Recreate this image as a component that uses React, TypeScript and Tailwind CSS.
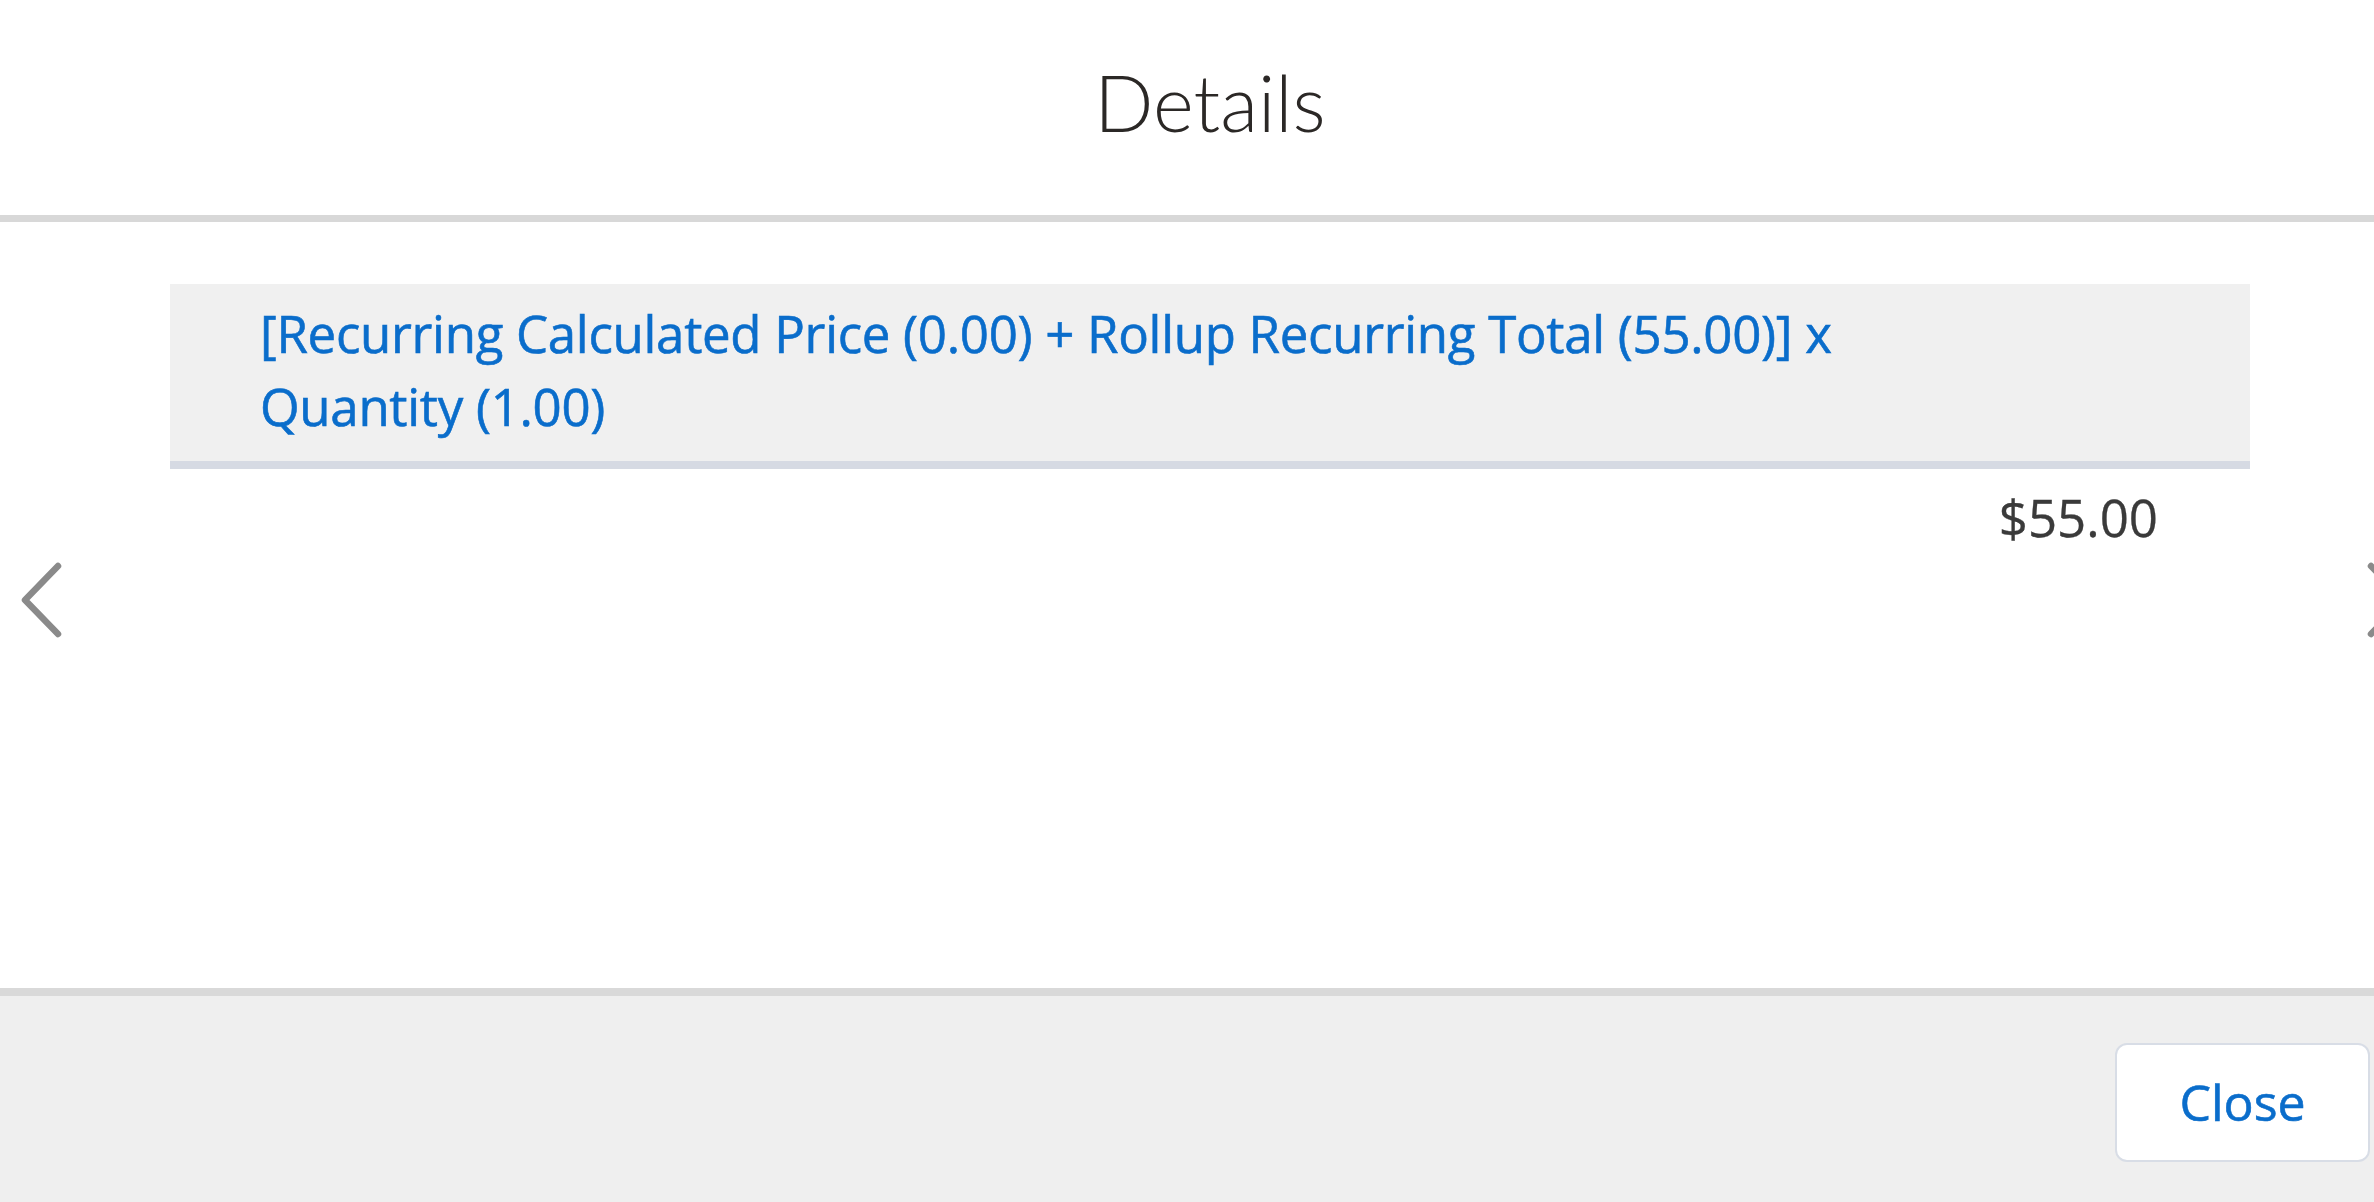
const formula = "[Recurring Calculated Price (0.00) + Rollup Recurring Total (55.00)] x Quantity (1.00)";

function Chevron({ dir }: { dir: "left" | "right" }) {
  const points = dir === "left" ? "38,4 5,38 38,72" : "6,4 39,38 6,72";
  return (
    <svg width="44" height="76" viewBox="0 0 44 76" fill="none" aria-hidden>
      <polyline points={points} stroke="#8a8a8a" strokeWidth="6.5" strokeLinecap="round" strokeLinejoin="round" />
    </svg>
  );
}

export default function App() {
  return (
    <div className="h-[1202px] w-full overflow-hidden bg-white font-['Open_Sans','Noto_Sans',sans-serif]">
      <div className="flex h-full w-[2420px] flex-col">
        {/* header */}
        <header className="flex h-[222px] shrink-0 items-start justify-center border-b-[7px] border-[#d8d8d8] pt-[57px]">
          <h2 className="font-['Lato',sans-serif] text-[78px] font-light leading-[90px] text-[#2b2826]">Details</h2>
        </header>

        {/* body */}
        <main className="relative flex-1 pt-[62px]">
          <button className="absolute left-[20px] top-[340px]" aria-label="Previous">
            <Chevron dir="left" />
          </button>
          <button className="absolute right-[11px] top-[340px]" aria-label="Next">
            <Chevron dir="right" />
          </button>

          <div className="mx-[170px]">
            <div className="border-b-[8px] border-[#d6dae3] bg-[#f0f0f0] pb-[18px] pl-[90px] pt-[13px]">
              <p className="max-w-[1660px] text-[51px] leading-[73px] tracking-[-0.3px] text-[#0a6dcb] [-webkit-text-stroke:0.6px_#0a6dcb]">
                {formula}
              </p>
            </div>
            <div className="mt-[12px] flex justify-end pr-[92px]">
              <span className="text-[51px] leading-[72px] text-[#3a3a3a] [-webkit-text-stroke:0.3px_#3a3a3a]">$55.00</span>
            </div>
          </div>
        </main>

        {/* footer */}
        <footer className="flex h-[214px] shrink-0 items-start justify-end border-t-[8px] border-[#d9d9d9] bg-[#efefef] pr-[50px] pt-[47px]">
          <button className="h-[119px] w-[255px] rounded-[12px] border-2 border-[#d8dde6] bg-white text-[50px] text-[#0a6dcb] [-webkit-text-stroke:0.6px_#0a6dcb]">
            Close
          </button>
        </footer>
      </div>
    </div>
  );
}
